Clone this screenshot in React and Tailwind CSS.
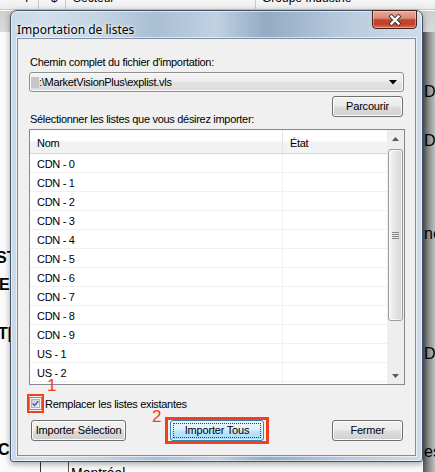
import React from "react";

function Btn({ children, className = "" }) {
  return (
    <div
      className={
        "flex h-[21px] shrink-0 items-center justify-center rounded-[3px] border border-[#707070] bg-[linear-gradient(180deg,#f2f2f2_0%,#ebebeb_48%,#dddddd_52%,#cfcfcf_100%)] text-[11px] leading-none tracking-[-0.2px] text-black shadow-[inset_0_0_0_1px_#fbfbfb] " +
        className
      }
    >
      {children}
    </div>
  );
}

export default function App() {
  const rows = [
    "CDN - 0",
    "CDN - 1",
    "CDN - 2",
    "CDN - 3",
    "CDN - 4",
    "CDN - 5",
    "CDN - 6",
    "CDN - 7",
    "CDN - 8",
    "CDN - 9",
    "US - 1",
    "US - 2",
  ];

  return (
    <div className="relative h-[472px] w-[435px] overflow-hidden bg-[#fbfbfb] font-['Liberation_Sans',Arial,sans-serif] text-black">
      {/* background application */}
      <div className="absolute left-0 top-0 h-[10px] w-full overflow-hidden border-b border-[#c8c8c8] bg-[linear-gradient(180deg,#f6f6f6,#ebebeb)]">
        <div className="absolute left-[38px] top-0 h-full border-l border-[#c9c9c9]" />
        <div className="absolute left-[65px] top-0 h-full border-l border-[#c9c9c9]" />
        <div className="absolute left-[255px] top-0 h-full border-l border-[#c9c9c9]" />
        <span className="absolute left-[25px] top-[-11px] text-[12px]">I</span>
        <span className="absolute left-[51px] top-[-11px] text-[12px]">$</span>
        <span className="absolute left-[73px] top-[-11px] text-[12px]">Secteur</span>
        <span className="absolute left-[262px] top-[-11px] text-[12px]">Groupe Industrie</span>
      </div>
      <div className="absolute left-0 top-[11px] h-[21px] w-full bg-[linear-gradient(180deg,#cfcfcf,#dadada)]" />
      <div className="absolute right-0 top-[32px] h-[440px] w-[12px] bg-[linear-gradient(90deg,#555555,#8a8a8a_45%,#c0c0c0)]" />
      <div className="absolute left-[424px] top-[84px] text-[16px] leading-none">Di</div>
      <div className="absolute left-[424px] top-[133px] text-[16px] leading-none">Di</div>
      <div className="absolute left-[424px] top-[226px] text-[16px] leading-none">ne</div>
      <div className="absolute left-[424px] top-[346px] text-[16px] leading-none">Di</div>
      <div className="absolute left-[424px] top-[444px] text-[16px] leading-none">es</div>
      <div className="absolute left-[-4px] top-[250px] text-[16px] font-bold leading-none">ST</div>
      <div className="absolute left-[-1px] top-[277px] text-[16px] font-bold leading-none">E</div>
      <div className="absolute left-[-2px] top-[326px] text-[16px] font-bold leading-none">T[</div>
      <div className="absolute left-[-2px] top-[442px] text-[16px] font-bold leading-none">CE</div>
      <div className="absolute left-[40px] top-[456px] h-[16px] border-l border-[#333]" />
      <div className="absolute left-[68px] top-[456px] h-[16px] border-l border-[#555]" />
      <div className="absolute left-[71px] top-[466px] text-[14px] leading-none">Montréal</div>

      {/* dialog window */}
      <div className="absolute left-[10px] top-[10px] flex h-[452px] w-[413px] flex-col rounded-t-[7px] rounded-b-[3px] border border-[#43546a] bg-[linear-gradient(90deg,#c9d9ea_0%,#d3dfeb_8%,#c3d3e3_22%,#a9bfd4_35%,#c0d1e2_50%,#93abc3_62%,#b6c9dc_80%,#cfdcea_100%)] shadow-[inset_0_0_0_1px_rgba(255,255,255,0.55),0_2px_6px_rgba(0,0,0,0.35)]">
        {/* title bar */}
        <div className="relative h-[27px] shrink-0 pl-[6px] pt-[6px]">
          <span className="font-['Noto_Sans',sans-serif] text-[12px] leading-[16px] text-black [text-shadow:0_0_6px_rgba(255,255,255,0.9),0_0_3px_rgba(255,255,255,0.9)]">
            Importation de listes
          </span>
          <div className="absolute right-[5px] top-[-1px] flex h-[19px] w-[45px] items-center justify-center rounded-b-[4px] border border-[#4a2019] bg-[linear-gradient(180deg,#e6aa9c_0%,#d88b78_42%,#c4452a_52%,#c0412a_78%,#dc7456_100%)] shadow-[inset_0_0_0_1px_rgba(255,255,255,0.35)]">
            <svg width="14" height="12" viewBox="0 0 14 12">
              <path d="M3.5 2.5 L10.5 9.5 M10.5 2.5 L3.5 9.5" stroke="#3b3b3b" strokeWidth="4.2" strokeLinecap="square" />
              <path d="M3.5 2.5 L10.5 9.5 M10.5 2.5 L3.5 9.5" stroke="#ffffff" strokeWidth="2.3" strokeLinecap="square" />
            </svg>
          </div>
        </div>

        {/* client area */}
        <div className="mx-[6px] flex h-[418px] flex-col border border-[#7d8ea2] bg-[#f0f0f0] px-[11px] text-[11px] tracking-[-0.3px] shadow-[0_0_0_1px_rgba(255,255,255,0.6)]">
          <div className="ml-[1px] mt-[17px] leading-[13px]">
            Chemin complet du fichier d'importation:
          </div>
          <div className="mt-[3px] flex h-[20px] w-[375px] shrink-0 items-center rounded-[3px] border border-[#8e8f8f] bg-[linear-gradient(180deg,#f4f4f4_0%,#ececec_48%,#e2e2e2_52%,#dcdcdc_100%)] pl-[1px] pr-[6px] shadow-[inset_0_0_0_1px_#fafafa]">
            <div className="h-[11px] w-[8px] bg-[#c6c6c6] blur-[0.6px]" />
            <span className="leading-none">:\MarketVisionPlus\explist.vls</span>
            <svg className="ml-auto" width="8" height="5" viewBox="0 0 8 5">
              <path d="M0 0 H8 L4 4.5 Z" fill="#000" />
            </svg>
          </div>
          <div className="mt-[4px] flex h-[30px] shrink-0 justify-between">
            <div className="ml-[1px] self-end leading-[13px]">
              Sélectionner les listes que vous désirez importer:
            </div>
            <Btn className="mr-[1px] w-[71px]">Parcourir</Btn>
          </div>

          {/* list view */}
          <div className="mt-[3px] flex h-[256px] w-[376px] shrink-0 border border-[#828790] bg-white">
            <div className="flex flex-1 flex-col">
              <div className="flex h-[24px] shrink-0 border-b border-[#d5d5d5] bg-[linear-gradient(180deg,#ffffff_0%,#ffffff_45%,#f1f2f4_55%,#f1f2f4_100%)]">
                <div className="flex w-[253px] items-center border-r border-[#e3e4e6] pl-[7px] pt-[3px]">Nom</div>
                <div className="flex flex-1 items-center pl-[7px] pt-[3px]">État</div>
              </div>
              {rows.map((r) => (
                <div key={r} className="flex h-[19px] shrink-0 border-b border-[#f0f0f0]">
                  <div className="flex w-[253px] items-center border-r border-[#f0f0f0] pl-[7px] pt-[3px]">{r}</div>
                  <div className="flex-1" />
                </div>
              ))}
              <div className="flex flex-1">
                <div className="w-[253px] border-r border-[#f0f0f0]" />
              </div>
            </div>
            {/* scrollbar */}
            <div className="flex w-[17px] flex-col bg-[#eeeeee]">
              <div className="flex h-[17px] shrink-0 items-center justify-center">
                <svg width="7" height="4" viewBox="0 0 7 4">
                  <path d="M3.5 0 L7 4 H0 Z" fill="#5a5a5a" />
                </svg>
              </div>
              <div className="mx-[1px] mt-[2px] flex h-[172px] shrink-0 items-center justify-center rounded-[3px] border border-[#9c9c9c] bg-[linear-gradient(90deg,#f5f5f5_0%,#e6e6e6_45%,#d6d6d6_100%)] shadow-[inset_0_0_0_1px_rgba(255,255,255,0.7)]">
                <div className="flex flex-col gap-[1px]">
                  <div className="h-[1px] w-[7px] bg-[#8a8a8a]" />
                  <div className="h-[1px] w-[7px] bg-[#8a8a8a]" />
                  <div className="h-[1px] w-[7px] bg-[#8a8a8a]" />
                  <div className="h-[1px] w-[7px] bg-[#8a8a8a]" />
                </div>
              </div>
              <div className="mt-auto flex h-[17px] shrink-0 items-center justify-center">
                <svg width="7" height="4" viewBox="0 0 7 4">
                  <path d="M0 0 H7 L3.5 4 Z" fill="#5a5a5a" />
                </svg>
              </div>
            </div>
          </div>

          {/* checkbox */}
          <div className="mt-[12px] flex h-[13px] shrink-0 items-center">
            <div className="h-[13px] w-[13px] border border-[#8e8f8f] bg-[#f4f4f4] p-[1px]">
              <div className="flex h-full w-full items-center justify-center border border-[#aeb3b9] bg-[linear-gradient(135deg,#c9cdd3,#eef0f2)]">
                <svg width="8" height="7" viewBox="0 0 8 7">
                  <path d="M0.8 3.6 L3 5.8 L7.2 0.8" stroke="#3d5aa0" strokeWidth="1.7" fill="none" />
                </svg>
              </div>
            </div>
            <span className="ml-[3px] pt-[1px] leading-none">Remplacer les listes existantes</span>
          </div>

          {/* buttons */}
          <div className="mt-[10px] flex shrink-0">
            <Btn className="ml-[2px] w-[95px]">Importer Sélection</Btn>
            <div className="ml-[44px] flex h-[21px] w-[94px] shrink-0 items-center justify-center rounded-[3px] border border-[#3c7fb1] bg-[linear-gradient(180deg,#eaf6fd_0%,#d9f0fc_48%,#bee6fd_52%,#a7d9f5_100%)] p-[2px] shadow-[inset_0_0_0_1px_rgba(255,255,255,0.6)]">
              <div className="flex h-full w-full items-center justify-center border border-dotted border-[#6b2a2a] leading-none tracking-[-0.2px]">
                Importer Tous
              </div>
            </div>
            <Btn className="ml-[68px] w-[71px]">Fermer</Btn>
          </div>
        </div>
      </div>

      {/* annotations */}
      <div className="absolute left-[27px] top-[394px] h-[19px] w-[17px] border-2 border-[#f2401e]" />
      <div className="absolute left-[47px] top-[377px] text-[17px] leading-[17px] text-[#f2401e]">1</div>
      <div className="absolute left-[152px] top-[408px] text-[17px] leading-[17px] text-[#f2401e]">2</div>
      <div className="absolute left-[165px] top-[417px] h-[27px] w-[104px] border-[3px] border-[#f2401e]" />
    </div>
  );
}
